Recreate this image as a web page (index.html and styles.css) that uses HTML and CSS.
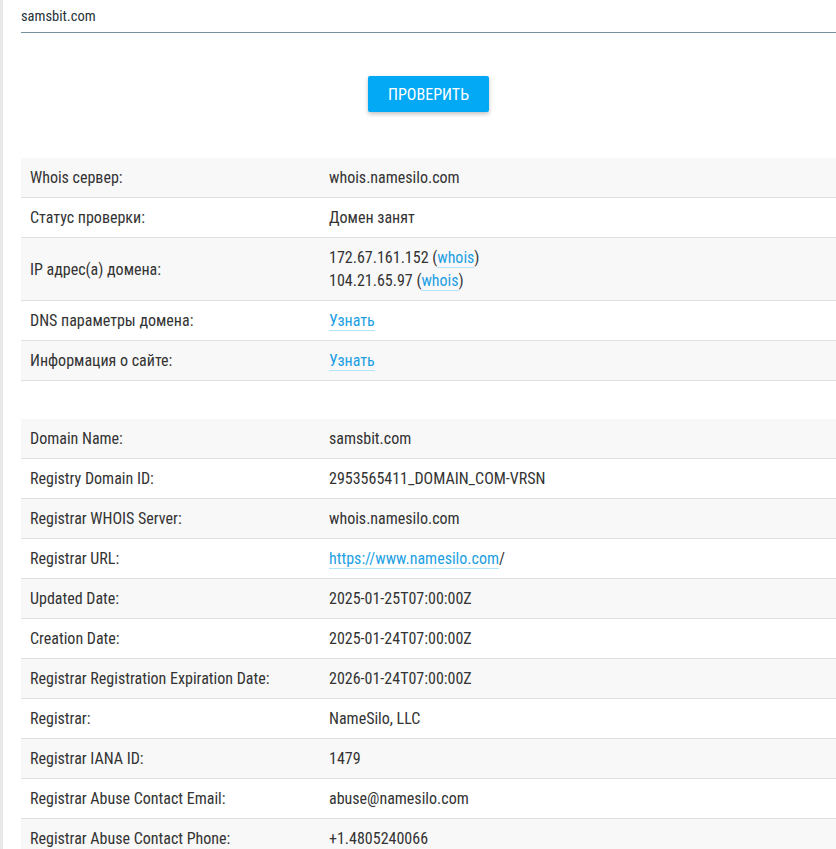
FILE: index.html
```html
<!DOCTYPE html>
<html lang="ru">
<head>
<meta charset="utf-8">
<link rel="stylesheet" href="styles.css">
</head>
<body>
<div class="page">
  <div class="field">samsbit.com</div>
  <div class="actions"><button class="btn">ПРОВЕРИТЬ</button></div>
  <table class="info">
    <tr><td class="k">Whois сервер:</td><td>whois.namesilo.com</td></tr>
    <tr><td class="k">Статус проверки:</td><td>Домен занят</td></tr>
    <tr class="tall"><td class="k">IP адрес(а) домена:</td><td>172.67.161.152 (<a>whois</a>)<br>104.21.65.97 (<a>whois</a>)</td></tr>
    <tr><td class="k">DNS параметры домена:</td><td><a>Узнать</a></td></tr>
    <tr><td class="k">Информация о сайте:</td><td><a>Узнать</a></td></tr>
  </table>
  <table class="info second">
    <tr><td class="k">Domain Name:</td><td>samsbit.com</td></tr>
    <tr><td class="k">Registry Domain ID:</td><td>2953565411_DOMAIN_COM-VRSN</td></tr>
    <tr><td class="k">Registrar WHOIS Server:</td><td>whois.namesilo.com</td></tr>
    <tr><td class="k">Registrar URL:</td><td><a>https://www.namesilo.com</a>/</td></tr>
    <tr><td class="k">Updated Date:</td><td>2025-01-25T07:00:00Z</td></tr>
    <tr><td class="k">Creation Date:</td><td>2025-01-24T07:00:00Z</td></tr>
    <tr><td class="k">Registrar Registration Expiration Date:</td><td>2026-01-24T07:00:00Z</td></tr>
    <tr><td class="k">Registrar:</td><td>NameSilo, LLC</td></tr>
    <tr><td class="k">Registrar IANA ID:</td><td>1479</td></tr>
    <tr><td class="k">Registrar Abuse Contact Email:</td><td>abuse@namesilo.com</td></tr>
    <tr><td class="k">Registrar Abuse Contact Phone:</td><td>+1.4805240066</td></tr>
  </table>
</div>
</body>
</html>
```
FILE: styles.css
```css
html, body {
  margin: 0;
  padding: 0;
  background: #fff;
}
body {
  font-family: "Roboto Condensed", Roboto, "Liberation Sans", sans-serif;
  font-stretch: condensed;
  font-size: 16px;
  color: #333;
  overflow: hidden;
}
.page {
  border-left: 3px solid #e8e8e8;
  padding-left: 18px;
  min-height: 849px;
  box-sizing: border-box;
}
.field {
  height: 32px;
  line-height: 34px;
  font-size: 14.5px;
  color: #263238;
  border-bottom: 1px solid #78909c;
}
.actions {
  display: flex;
  justify-content: center;
  padding-top: 43px;
  padding-bottom: 46px;
}
.btn {
  width: 121px;
  height: 36px;
  background: #03a9f4;
  color: #fff;
  border: none;
  border-radius: 2px;
  font-family: inherit;
  font-stretch: condensed;
  font-size: 16px;
  box-shadow: 0 2px 4px rgba(0,0,0,0.25);
}
.info {
  border-collapse: collapse;
  width: 100%;
}
.info td {
  height: 39px;
  padding: 0 0 0 9px;
  border-bottom: 1px solid #e0e0e0;
  vertical-align: middle;
  line-height: 23px;
}
.info td.k {
  width: 290px;
}
.info tr:nth-child(odd) td {
  background: #f8f8f8;
}
.info tr.tall td {
  height: 62px;
}
.second {
  margin-top: 38px;
}
a {
  color: #1e9fe3;
  text-decoration: none;
  border-bottom: 1px solid #b3e5fc;
}
```
